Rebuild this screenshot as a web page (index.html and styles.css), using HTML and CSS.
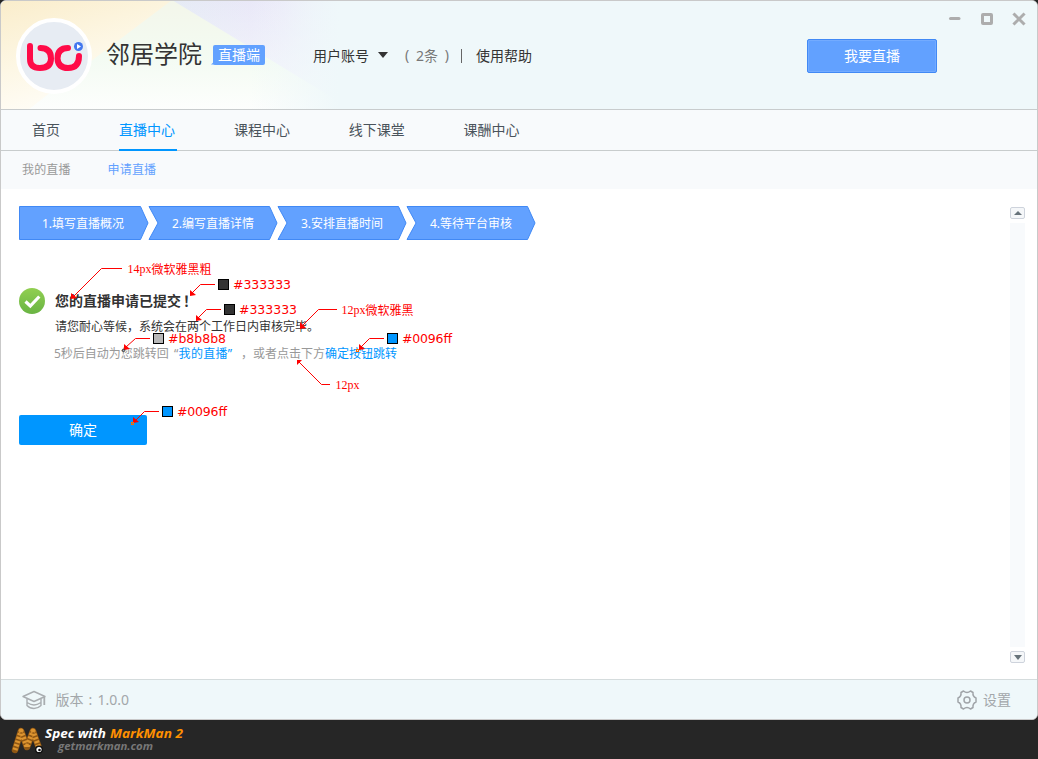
FILE: index.html
```html
<!DOCTYPE html>
<html lang="zh-CN">
<head>
<meta charset="utf-8">
<title>邻居学院 直播端</title>
<link rel="stylesheet" href="styles.css">
</head>
<body>
<div class="window">
  <header class="header">
    <svg class="header-art" width="1036" height="108" viewBox="1 1 1036 108" preserveAspectRatio="none">
      <defs>
        <linearGradient id="gold" x1="0" y1="0" x2="0.45" y2="1"><stop offset="0" stop-color="#faedcb"/><stop offset=".55" stop-color="#fdf7e5"/><stop offset="1" stop-color="#fffefa"/></linearGradient>
        <linearGradient id="mint" x1="0" y1="0" x2="0" y2="1"><stop offset="0" stop-color="#f3f6ea"/><stop offset=".5" stop-color="#f3fbf2"/><stop offset="1" stop-color="#fdfefd"/></linearGradient>
        <linearGradient id="lilac" x1="0" y1="0" x2="1" y2="0"><stop offset="0" stop-color="#e5ebf5"/><stop offset=".5" stop-color="#ebe7f9"/><stop offset="1" stop-color="#eff8fa"/></linearGradient>
        <linearGradient id="lilacfade" x1="0" y1="0" x2="0" y2="1"><stop offset="0" stop-color="#f5f9fc" stop-opacity="0"/><stop offset="1" stop-color="#f8fafc"/></linearGradient>
        <linearGradient id="edge" x1="0" y1="0" x2="1" y2="0"><stop offset="0" stop-color="#eff8fa" stop-opacity="0"/><stop offset="1" stop-color="#eff8fa"/></linearGradient>
      </defs>
      <rect width="1038" height="110" fill="#eff8fa"/>
      <path d="M168 0H400V110H168Z" fill="url(#lilac)"/>
      <path d="M168 0H400V110H168Z" fill="url(#lilacfade)"/>
      <path d="M0 0H172L320 90L350 110H0Z" fill="url(#mint)"/>
      <path d="M0 0H172L70 77L28 110H0Z" fill="url(#gold)"/>
      <rect x="250" width="90" height="110" fill="url(#edge)"/>
      <rect x="339.500" width="64" height="110" fill="#eff8fa"/>
    </svg>
    <div class="avatar">
      <svg width="58" height="34" viewBox="25 41 58 34" fill="none" stroke="#ff0b48" stroke-width="6" stroke-linecap="round">
        <path d="M30 47V60Q30 69 40 69Q51 69 51 59.500Q51 49 40.500 49"/>
        <path d="M68 49Q57.500 49 57.500 59.500Q58 69 68 69Q79 69 79 57"/>
        <circle cx="78.500" cy="47.500" r="4.500" fill="#4377ef" stroke="none"/>
        <path d="M77 45L81 47.500L77 50Z" fill="#fff" stroke="none"/>
      </svg>
    </div>
    <h1 class="brand">邻居学院</h1>
    <div class="badge">直播端<svg width="5" height="5" viewBox="0 0 5 5"><path d="M0 4.500H5V0Z" fill="#62a1ff"/></svg></div>
    <div class="account">
      <span class="user">用户账号</span>
      <svg class="caret" width="10" height="6" viewBox="0 0 10 6"><path d="M0 0H10L5 6Z" fill="#333"/></svg>
      <span class="count"><i>(</i>2条<i>)</i></span>
      <span class="divider"></span>
      <span>使用帮助</span>
    </div>
    <button class="live">我要直播</button>
    <svg class="controls" width="78" height="14" viewBox="0 0 78 14" fill="none" stroke="#adadad">
      <path d="M2.500 6.500H11" stroke-width="3" stroke-linecap="round"/>
      <rect x="34.500" y="2.500" width="9" height="9" rx=".5" stroke-width="3"/>
      <path d="M66.500 2.500L75.500 11.500M75.500 2.500L66.500 11.500" stroke-width="3" stroke-linecap="square"/>
    </svg>
  </header>

  <nav class="nav">
    <a>首页</a><a class="active">直播中心</a><a>课程中心</a><a>线下课堂</a><a>课酬中心</a>
  </nav>
  <nav class="subnav"><a>我的直播</a><a class="current">申请直播</a></nav>

  <main class="content">
    <section class="body">
      <ol class="steps">
        <li><svg width="130" height="34"><path d="M.5 .5H121.500L129 17L121.500 33.500H.5Z"/></svg><span>1.填写直播概况</span></li>
        <li><svg width="130" height="34"><path d="M1 .5H121.500L129 17L121.500 33.500H1L10 17Z"/></svg><span>2.编写直播详情</span></li>
        <li><svg width="130" height="34"><path d="M1 .5H121.500L129 17L121.500 33.500H1L10 17Z"/></svg><span>3.安排直播时间</span></li>
        <li><svg width="130" height="34"><path d="M1 .5H121.500L129 17L121.500 33.500H1L10 17Z"/></svg><span>4.等待平台审核</span></li>
      </ol>
      <div class="result">
        <svg class="check" width="26" height="26" viewBox="0 0 26 26">
          <defs><linearGradient id="ok" x1="0" y1="0" x2="0" y2="1"><stop offset="0" stop-color="#91cf51"/><stop offset="1" stop-color="#69b443"/></linearGradient></defs>
          <circle cx="13" cy="13" r="13" fill="url(#ok)"/>
          <path d="M6.500 13.500L11.300 18L20.300 8.500" fill="none" stroke="#fff" stroke-width="3.200"/>
        </svg>
        <div class="message">
          <h2>您的直播申请已提交<i>！</i></h2>
          <p class="wait">请您耐心等候，系统会在两个工作日内审核完毕。</p>
          <p class="jump"><span class="auto">5秒后自动为您跳转回</span><span class="quote">“<a>我的直播”</a></span><span class="comma">，</span>或者点击下方<a>确定按钮跳转</a></p>
        </div>
      </div>
      <button class="confirm">确定</button>
    </section>
    <aside class="scroll">
      <span class="arrow"><svg width="8" height="4" viewBox="0 0 8 4"><path d="M0 4H8L4 0Z" fill="#67737a"/></svg></span>
      <span class="track"></span>
      <span class="arrow"><svg width="8" height="5" viewBox="0 0 8 5"><path d="M0 0H8L4 5Z" fill="#67737a"/></svg></span>
    </aside>
  </main>

  <footer class="footer">
    <svg width="24" height="20" viewBox="0 0 24 20" fill="none" stroke="#a9adb0" stroke-width="1.400" stroke-linejoin="round">
      <path d="M1 6.500L12 1.500L23 6.500L12 11.500Z"/><path d="M5 9V15.500Q8 18.500 12 18.500T19 15.500V9M5 12.500Q9 15 12 15T19 12.500"/><path d="M22.300 7V15" stroke-width="1.800"/>
    </svg>
    <span class="version">版本<i>:</i>1.0.0</span>
    <svg class="gear" width="20" height="20" viewBox="0 0 20 20" fill="none" stroke="#a0a4a8" stroke-width="1.500" stroke-linejoin="round">
      <path d="M6.500 1Q10 4 13.500 1L16 2.500Q15.500 6.500 19 8V12Q15.500 13.500 16 17.500L13.500 19Q10 16 6.500 19L4 17.500Q4.500 13.500 1 12V8Q4.500 6.500 4 2.500Z"/><circle cx="10" cy="10" r="3"/>
    </svg>
    <span>设置</span>
  </footer>
</div>

<div class="credit">
  <svg width="200" height="39" viewBox="0 720 200 39">
    <g fill="none" stroke-linejoin="round">
      <path d="M15 750L21 731L27 747L33 731L39 748" stroke="#8f5714" stroke-width="6.500" stroke-linecap="round"/>
      <path d="M15 750L21 731L27 747L33 731L39 748" stroke="#dc9430" stroke-width="5" stroke-dasharray="2.200 1.600"/>
    </g>
    <circle cx="39" cy="749.500" r="4" fill="#111"/><circle cx="39" cy="749.500" r="2.600" fill="#fff"/><circle cx="39.500" cy="750" r="1.300" fill="#111"/>
    <text class="spec" x="45" y="738" textLength="61" lengthAdjust="spacingAndGlyphs">Spec with</text>
    <text class="spec name" x="110" y="738" textLength="73" lengthAdjust="spacingAndGlyphs">MarkMan 2</text>
    <text class="site" x="58" y="750" textLength="95" lengthAdjust="spacingAndGlyphs">getmarkman.com</text>
  </svg>
</div>

<svg class="notes" width="1038" height="759" viewBox="0 0 1038 759">
  <g fill="none" stroke="#f00">
    <path d="M74 296L101.500 268.500H122"/>
    <path d="M192 293L200.500 284.500H215"/>
    <path d="M198 318L206.500 309.500H221"/>
    <path d="M303 325L318.500 309.500H337"/>
    <path d="M126 347L135.500 338.500H150"/>
    <path d="M361 347L369.500 338.500H384"/>
    <path d="M299 362L321.500 384.500H330"/>
    <path d="M136 420L144.500 411.500H159"/>
  </g>
  <g fill="#f00">
    <path d="M71 299V293L77 298Z"/><path d="M190 296V290L196 295Z"/><path d="M196 321V315L202 320Z"/>
    <path d="M300 329V322L306 328Z"/><path d="M124 350V344L130 349Z"/><path d="M359 350V344L365 349Z"/>
    <path d="M297 365V360H302Z"/><path d="M133 423V417L139 422Z"/>
  </g>
  <g stroke="#000">
    <rect x="218.500" y="279.500" width="10" height="10" fill="#333"/>
    <rect x="224.500" y="304.500" width="10" height="10" fill="#333"/>
    <rect x="153.500" y="333.500" width="10" height="10" fill="#b8b8b8"/>
    <rect x="387.500" y="333.500" width="10" height="10" fill="#0096ff"/>
    <rect x="162.500" y="406.500" width="10" height="10" fill="#0096ff"/>
  </g>
  <circle cx="123.500" cy="350.500" r="1.200" fill="none" stroke="#333"/>
  <g fill="none" stroke="#ff6a00"><rect x="356.500" y="349.500" width="2" height="2"/><rect x="131.500" y="422.500" width="2" height="2"/></g>
  <g class="hex">
    <text x="233" y="289" textLength="58">#333333</text>
    <text x="239" y="314" textLength="58">#333333</text>
    <text x="168" y="343" textLength="58">#b8b8b8</text>
    <text x="402" y="343" textLength="50">#0096ff</text>
    <text x="177" y="416" textLength="50">#0096ff</text>
  </g>
  <g class="font-note">
    <text x="127.500" y="273" textLength="24">14px</text><text x="151.500" y="274">微软雅黑粗</text>
    <text x="341.500" y="314" textLength="24">12px</text><text x="365.500" y="315">微软雅黑</text>
    <text x="335.500" y="389" textLength="24">12px</text>
  </g>
</svg>
</body>
</html>
```

FILE: styles.css
```css
* { box-sizing: border-box; }
body { margin: 0; position: relative; width: 1038px; height: 759px; overflow: hidden; background: #262626; font: 14px "Noto Sans", "Noto Sans CJK SC", sans-serif; color: #333; }
h1, h2, p, ol { margin: 0; padding: 0; font-weight: normal; }
svg { display: block; flex: none; }
i { font-style: normal; }
button { border: 0; padding: 0; font: inherit; color: #fff; }

.window { display: flex; flex-direction: column; height: 720px; border: 1px solid #c9c9c9; border-radius: 6px; overflow: hidden; background: #fff; }

.header { position: relative; display: flex; align-items: center; height: 109px; flex: none; padding-left: 15px; border-bottom: 1px solid #c8cccd; white-space: nowrap; }
.header > * { position: relative; flex: none; }
.header > .header-art { position: absolute; left: 0; top: 0; }
.avatar { display: flex; align-items: center; justify-content: center; width: 76px; height: 76px; margin-top: 2px; border: 4px solid #fff; border-radius: 50%; background: #e7ecf3; padding-top: 2px; }
.brand { width: 97px; margin: -3px 0 0 14px; font-size: 24px; line-height: 36px; font-weight: 400; }
.badge { width: 52px; height: 20px; margin-left: 10px; border-radius: 2px; background: #62a1ff; color: #fff; font-size: 14px; line-height: 20px; text-align: center; }
.badge svg { position: absolute; left: -2px; bottom: 0; }
.account { display: flex; align-items: center; margin-left: 48px; padding-top: 2px; line-height: 20px; }
.caret { margin: -2px 16px 0 9px; }
.count { color: #777; width: 46px; display: flex; justify-content: center; }
.count i { width: 11px; margin-top: -1px; text-align: center; }
.count i:first-child { text-align: left; }
.count i:last-child { text-align: right; }
.divider { width: 1px; height: 14px; margin: 0 14px 0 11px; background: #666; }
.live { width: 130px; height: 34px; margin: 2px 0 0 275px; border: 1px solid #4189f5; border-radius: 2px; background: #62a1ff; box-shadow: inset 0 0 0 1px #73abff; line-height: 32px; }
.controls { align-self: flex-start; margin: 11px 0 0 11px; }

.nav { display: flex; flex: none; height: 41px; padding-left: 31px; gap: 58px; border-bottom: 1px solid #c8cccd; background: #f8fafc; color: #4a535b; line-height: 40px; }
.nav a { height: 41px; padding-right: .8px; }
.nav a:first-child { padding-right: 1px; }
.nav .active { width: 58px; margin-right: -1px; color: #0096ff; border-bottom: 2px solid #0096ff; }
.subnav { display: flex; flex: none; height: 38px; padding-left: 21px; gap: 37px; background: #f8fafc; font-size: 12px; line-height: 37px; color: #999; letter-spacing: .15px; }
.subnav .current { color: #62a1ff; }

.content { display: flex; flex: 1; justify-content: space-between; }
.body { padding: 17px 0 0 18px; }
.steps { display: flex; list-style: none; color: #fff; font-size: 12px; line-height: 35px; height: 34px; }
.steps li { display: grid; width: 129px; }
.steps li > * { grid-area: 1 / 1; }
.steps span { padding-left: 23px; }
.steps li + li span { padding-left: 24px; }
.steps svg { overflow: visible; fill: #62a1ff; stroke: #4189f5; }
.result { display: flex; gap: 10px; margin-top: 48px; }
.message h2 { font-size: 14px; font-weight: bold; line-height: 26px; }
.message h2 i { margin-left: 2px; }
.wait, .jump { font-size: 12px; line-height: 26px; white-space: nowrap; }
.jump { display: flex; margin-top: 1px; color: #999; }
.jump a { color: #0096ff; }
.auto { width: 120px; margin-left: -1px; }
.quote { width: 61px; letter-spacing: .3px; }
.comma { width: 18px; text-align: right; }
.confirm { display: block; width: 128px; height: 30px; margin-top: 48px; border-radius: 2px; background: #0096ff; line-height: 30px; }

.scroll { display: flex; flex-direction: column; gap: 4px; width: 15px; margin: 18px 12px 16px 0; }
.arrow { display: flex; flex: none; align-items: center; justify-content: center; height: 12px; border: 1px solid #ced3dc; border-radius: 2px; background: #f5f7f9; }
.track { flex: 1; background: #f8fafc; }

.footer { display: flex; flex: none; align-items: center; height: 40px; padding: 0 26px 0 21px; border-top: 1px solid #d5dcdd; background: #eff8fa; color: #a3a7aa; line-height: 20px; }
.version { margin-left: 9.500px; }
.version i { display: inline-block; width: 14px; text-align: center; }
.gear { margin: 0 6px 0 auto; }

.credit { height: 39px; }
.spec { font: italic bold 12.500px "Open Sans", sans-serif; fill: #fff; }
.spec.name { fill: #ff9000; }
.site { font: italic bold 10.500px "Open Sans", sans-serif; fill: #777; }

.notes { position: absolute; left: 0; top: 0; pointer-events: none; }
.hex { font: 12.500px "DejaVu Sans", sans-serif; fill: #f00; }
.font-note { font: 12px "Liberation Serif", "Noto Sans CJK SC", serif; fill: #f00; }
```
